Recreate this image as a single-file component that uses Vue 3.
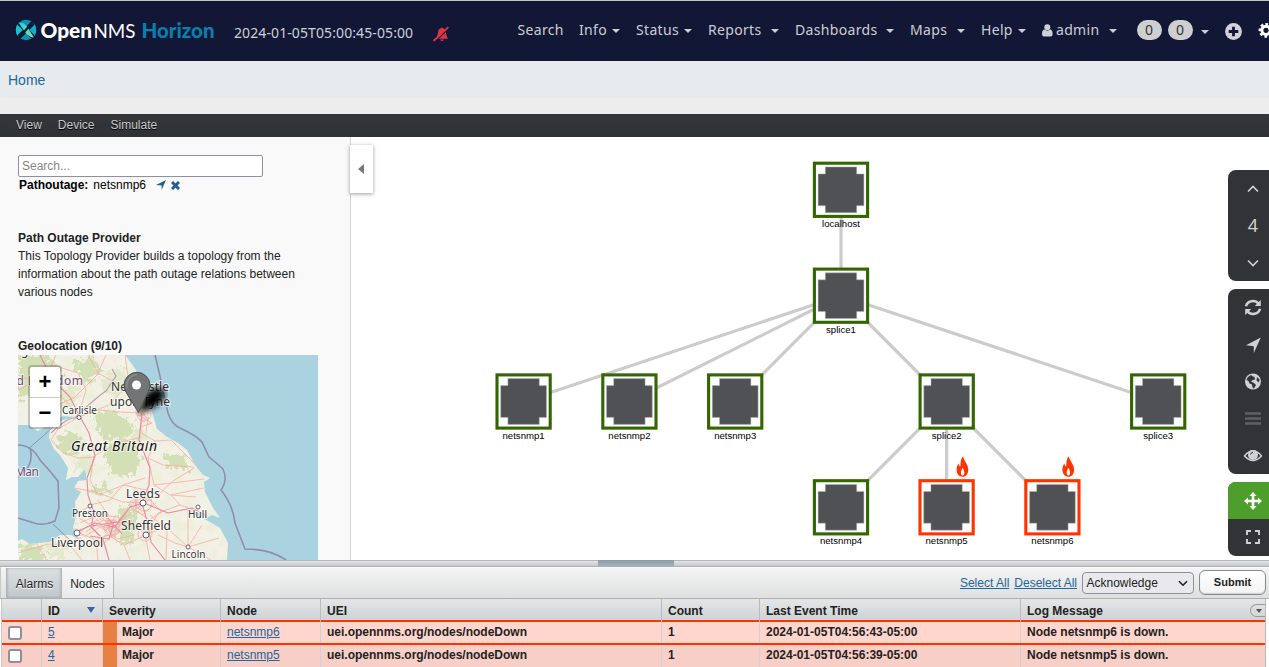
<script setup>
const nav = [
  { label: 'Search', w: 61.5 },
  { label: 'Info', w: 57, caret: 33 },
  { label: 'Status', w: 72, caret: 48 },
  { label: 'Reports', w: 87, caret: 63 },
  { label: 'Dashboards', w: 115, caret: 91 },
  { label: 'Maps', w: 71, caret: 47 },
  { label: 'Help', w: 60.5, caret: 37 },
]
const nodes = [
  { id: 'localhost', x: 841, y: 189.8 },
  { id: 'splice1', x: 841, y: 295.7 },
  { id: 'netsnmp1', x: 523.6, y: 401.5 },
  { id: 'netsnmp2', x: 629.4, y: 401.5 },
  { id: 'netsnmp3', x: 735.2, y: 401.5 },
  { id: 'splice2', x: 946.7, y: 401.5 },
  { id: 'splice3', x: 1158.2, y: 401.5 },
  { id: 'netsnmp4', x: 841, y: 507.3 },
  { id: 'netsnmp5', x: 946.6, y: 507.3, down: true },
  { id: 'netsnmp6', x: 1052.4, y: 507.3, down: true },
]
const byId = Object.fromEntries(nodes.map((n) => [n.id, n]))
const edges = [
  ['localhost', 'splice1'], ['splice1', 'netsnmp1'], ['splice1', 'netsnmp2'],
  ['splice1', 'netsnmp3'], ['splice1', 'splice2'], ['splice1', 'splice3'],
  ['splice2', 'netsnmp4'], ['splice2', 'netsnmp5'], ['splice2', 'netsnmp6'],
].map(([a, b]) => ({ a: byId[a], b: byId[b] }))
const towns = [
  [61, 62.5, 2], [72, 151, 2], [125, 148, 3], [59, 178, 3], [128, 180, 3], [180, 152, 2], [170, 192, 2],
]
const alarms = [
  { id: 5, node: 'netsnmp6', time: '2024-01-05T04:56:43-05:00' },
  { id: 4, node: 'netsnmp5', time: '2024-01-05T04:56:39-05:00' },
]
</script>

<template>
  <div class="page">
    <header class="top">
      <svg class="logo" width="202" height="30" viewBox="0 0 202 30">
        <defs>
          <linearGradient id="lg" x1="0" y1="0" x2="1" y2="1">
            <stop offset="0" stop-color="#14d1df" /><stop offset="1" stop-color="#8be8a5" />
          </linearGradient>
          <clipPath id="disc"><circle cx="11" cy="15" r="10.2" /></clipPath>
        </defs>
        <g clip-path="url(#disc)">
          <rect x="0" y="4" width="22" height="22" fill="#0a93b5" />
          <path d="M0 4 11 15 0 26z" fill="#16c3d3" />
          <path d="M22 4 11 15 22 26z" fill="#0cb2cb" />
          <path d="M0 4 22 26M22 4 0 26" stroke="#131736" stroke-width="4.600" />
          <path d="M3.500 7.500Q9 6.500 12.800 13L19.300 23Q11.500 21 9 15.500z" fill="url(#lg)" />
          <path d="M19 5.500 3 24" stroke="#131736" stroke-width="2.200" />
        </g>
        <text x="25.500" y="23" class="lt b" textLength="51.500" lengthAdjust="spacingAndGlyphs">Open</text>
        <text x="78.500" y="23" class="lt" textLength="42" lengthAdjust="spacingAndGlyphs">NMS</text>
        <text x="126.500" y="23" class="lt b h" textLength="73" lengthAdjust="spacingAndGlyphs">Horizon</text>
      </svg>
      <span class="stamp">2024-01-05T05:00:45-05:00</span>
      <svg class="bell" width="16" height="16" viewBox="0 0 16 16">
        <path d="M2 12.700Q5 10 5 6.500Q5 2.800 8.200 2.200Q9 .3 9.800 2.200Q13 2.800 13 6.500Q13 10 15.200 12.700zM7 13.400H11Q9 16.400 7 13.400z" fill="#dc3545" />
        <path d="M1.300 16 16.300 2" stroke="#131736" stroke-width="1.600" />
        <path d="M.6 14.900 15.400 1.100" stroke="#dc3545" stroke-width="1.800" />
        <path d="M-.2 11.500 4 8V13z" fill="#131736" />
        <path d="M.6 14.900 8 8" stroke="#dc3545" stroke-width="1.800" />
      </svg>
      <nav class="nav">
        <span v-for="n in nav" :key="n.label" class="item" :style="{ width: n.w + 'px' }">
          <span class="lab" :style="n.caret ? { width: n.caret + 'px' } : {}">{{ n.label }}</span>
          <i v-if="n.caret" class="caret" />
        </span>
        <svg class="user" width="11" height="13" viewBox="0 0 11 13" fill="#cdd0d6">
          <circle cx="5.300" cy="3.200" r="3" /><path d="M0 10Q0 5.500 2.700 5.500Q5.300 7.800 8 5.500Q10.600 5.500 10.600 10Q10.600 12.500 8.500 12.500H2Q0 12.500 0 10z" />
        </svg>
        <span class="lab admin">admin</span><i class="caret" />
        <span class="pill p1">0</span><span class="pill">0</span><i class="caret c2" />
        <svg class="plus" width="17" height="17" viewBox="0 0 17 17">
          <circle cx="8.500" cy="8.500" r="8.400" fill="#d0d2d7" /><path d="M8.500 3.700V13.300M3.700 8.500H13.300" stroke="#131736" stroke-width="2.800" />
        </svg>
        <svg class="gear" width="17" height="17" viewBox="0 0 17 17">
          <circle cx="8" cy="8.300" r="4.100" fill="none" stroke="#fff" stroke-width="3" />
          <circle cx="8" cy="8.300" r="6.200" fill="none" stroke="#fff" stroke-width="2.400" stroke-dasharray="2.700 2.169" stroke-dashoffset="1.350" />
        </svg>
      </nav>
    </header>
    <div class="crumb"><a>Home</a></div>
    <div class="menu"><span>View</span><span>Device</span><span>Simulate</span></div>

    <main class="main">
      <aside class="side">
        <input class="search" placeholder="Search..." />
        <div class="crit">
          <b>Pathoutage:</b><span>netsnmp6</span>
          <svg width="10" height="10" viewBox="0 0 10 10"><path d="M10 0 5.600 10V5.500L0 4.900z" fill="#225f91" /></svg>
          <svg class="x" width="9" height="9" viewBox="0 0 9 9"><path d="M1 1 8 8M8 1 1 8" stroke="#225f91" stroke-width="3" /></svg>
        </div>
        <h4 class="prov">Path Outage Provider</h4>
        <p>This Topology Provider builds a topology from the information about the path outage relations between various nodes</p>
        <h4 class="geo">Geolocation (9/10)</h4>
        <div class="map">
          <svg width="300" height="205" viewBox="0 0 300 205">
            <defs>
              <clipPath id="land"><path d="M0 0H107L113 8 118 15 125 34 133 54 139 74 149 82 160 88 169 95 177 110 185 120 192 123 186 127 187 137 195 153 202 163 194 160 190 162 180 158 168 155 180 161 192 167 202 173 210 188 209 205H0V186L4 184 12 189 32 187 42 180 53 180 61 185 55 173 58 161 57 147 63 137 56 133 60 126 69 125 67 114 60 122 54 122 48 125 50 113 42 100 36 94 31 83 32 73 45 65 58 62 45 61 32 69 20 76 10 70 0 70z" /></clipPath>
              <filter id="soft"><feGaussianBlur stdDeviation="3" /></filter>
              <filter id="rag" x="-20%" y="-20%" width="140%" height="140%"><feTurbulence type="fractalNoise" baseFrequency=".2" numOctaves="3" seed="4" /><feDisplacementMap in="SourceGraphic" scale="18" xChannelSelector="R" yChannelSelector="G" /></filter>
              <filter id="mottle" x="0" y="0" width="100%" height="100%">
                <feTurbulence type="fractalNoise" baseFrequency=".09" numOctaves="4" seed="11" />
                <feColorMatrix values="0 0 0 0 .78  0 0 0 0 .86  0 0 0 0 .63  0 3 0 0 -1.45" />
              </filter>
            </defs>
            <rect width="300" height="205" fill="#aad3df" />
            <g clip-path="url(#land)">
              <rect width="300" height="205" fill="#f3f0e6" />
              <rect width="300" height="205" filter="url(#mottle)" opacity=".6" />
              <g filter="url(#rag)" fill="#d3e0b6">
                <path d="M0 0H30L45 20 20 40 0 45zM55 6 75 2 85 18 65 30zM75 60 92 55 117 70 108 85 90 85 78 76z" />
                <path d="M85 90 113 85 125 105 112 122 93 118zM38 84 55 76 66 86 58 103 43 96zM146 98 168 102 170 116 150 112z" />
                <path d="M73 133 88 128 93 137 80 141zM101 152 117 150 117 185 103 190zM0 192 20 187 30 205H0z" />
              </g>
              <g filter="url(#rag)" fill="#e2e9cc">
                <path d="M40 30 62 32 57 52 42 55zM60 100 75 105 74 120 60 115zM118 70 130 80 120 97 112 86zM30 188 50 190 47 205H35zM82 24 100 12 112 24 104 40 86 38z" />
              </g>
              <g fill="#e6dcd9" filter="url(#rag)"><circle cx="94" cy="173" r="8" /><circle cx="61" cy="177" r="6" /><circle cx="120" cy="145" r="8" /><circle cx="127" cy="175" r="6" /><circle cx="126" cy="62" r="6" /></g>
              <g fill="none" stroke="#f8ada0" stroke-width=".8" stroke-linejoin="round">
                <path d="M0 20 20 28 34 10 60 18 68 35 60 62 81 55 101 57 124 58 133 53M61 62 40 74 33 85 44 97 60 103 76 102M60 62 91 50 111 28 107 0M70 0 80 18 111 35 124 58M0 35 20 25M38 0 30 18 42 40 61 61M88 0 79 20 57 42 40 50" />
                <path d="M123 58 123 78 137 86 153 85 173 105 186 120M137 86 130 103 145 110 176 112M130 103 136 130 162 127 186 124M136 130 152 140 186 133M124 82 100 88 76 101 72 125 80 140 106 130 132 136M56 133 78 137 105 147 126 148 140 140 155 126 176 113M72 150 92 145 105 130 127 123" />
                <path d="M72 151 56 160M72 151 94 173 126 148M59 177 74 170 94 173 113 166 127 180 148 172 170 192 201 183M59 177 78 185 90 180 106 190 128 180 140 158 162 150 182 157M127 180 132 205M148 205 149 175 132 160M170 192V155M170 192 193 205M78 185 80 205M106 190 112 205M3 197 30 189 53 192 64 205M162 150 153 140 178 142" />
                <circle cx="94" cy="173" r="8" /><circle cx="94" cy="173" r="4" /><circle cx="126" cy="148" r="8" /><circle cx="126" cy="59" r="7" /><circle cx="127" cy="179" r="7" />
                <path d="M61 163 71 169 88 162 101 178 83 182 73 171M68 177 85 165 104 168M87 158 94 182M117 140 132 145 144 157 131 165 118 155zM119 50 130 65 128 76M140 180 157 188 170 192 184 170M20 192 28 203M80 145 91 161" />
                <path d="M62 168 80 160 100 162 110 175M66 182 82 172 100 184 116 180M75 160 88 176 98 160M84 190 97 178 108 160M120 60 134 68 122 72M110 150 124 160 138 148" />
              </g>
              <g fill="none" stroke="#e8879f" stroke-width="1.100" stroke-linejoin="round">
                <path d="M22 0 34 24 52 42 60 58 71 78 77 101 69 123 70 140 76 158 73 172 85 184 91 205M124 59 121 85 132 113 131 130 124 148 129 166 133 187 147 205M59 177 77 168 97 172 112 152 126 148 150 158 174 153 189 161M73 171 100 167 113 151M90 163 104 179M72 181 91 184 96 167" />
              </g>
              <path d="M33 78Q50 62 57 63 76 44 88 36L98 21 94 14" fill="none" stroke="#b8a4b1" stroke-width="1.300" />
            </g>
            <g fill="none" stroke="#8d7ba3" stroke-width="1.600" opacity=".8">
              <path d="M137 0Q142 20 145 36L150 58Q154 70 162 73 179 81 184 87L191 102Q202 111 205 114 210 125 203 135 215 150 217 168L227 194Q253 194 268 205" />
              <path d="M0 90Q14 90 22 105L31 115 40 126 41 153 37 166Q25 172 13 167L0 163M12 93Q17 111 0 122" />
              <path d="M10 94Q22 84 35 72M35 169 58 191" stroke-width="1" />
            </g>
            <g class="place">
              <text x="-9" y="30" class="purple" textLength="74">ed Kingdom</text>
              <text x="-3" y="121" class="purple" textLength="24">Man</text>
              <text x="3" y="-.5" textLength="7">g</text>
              <text x="93" y="35.500" textLength="58">Newcastle</text>
              <text x="92" y="51" textLength="60">upon Tyne</text>
              <text x="44" y="58.500" class="sm" textLength="35">Carlisle</text>
              <text x="108" y="143" textLength="34">Leeds</text>
              <text x="54" y="162" class="sm" textLength="36">Preston</text>
              <text x="103" y="175" textLength="50">Sheffield</text>
              <text x="33" y="192" textLength="52">Liverpool</text>
              <text x="170" y="163" class="sm" textLength="19">Hull</text>
              <text x="153.500" y="202.500" class="sm" textLength="34">Lincoln</text>
              <text x="53" y="95.500" class="gb" textLength="86">Great Britain</text>
            </g>
            <circle v-for="t in towns" :key="t[0] + '-' + t[1]" :cx="t[0]" :cy="t[1]" :r="t[2]" fill="#fff" stroke="#555" stroke-width=".9" />
            <path d="M120 58 127 40Q140 28 146 36 150 50 120 58z" filter="url(#soft)" />
            <path d="M120.500 57.500 108.500 38A13 13 0 1 1 129.500 38z" fill="#737475" stroke="#4d4f50" />
            <path d="M119 19.500A11 11 0 0 0 109 33" fill="none" stroke="#8d8d8d" stroke-width="1.500" />
            <circle cx="118.500" cy="30" r="4.500" fill="#fff" />
          </svg>
          <div class="zoom"><b>+</b><b>−</b></div>
        </div>
      </aside>
      <section class="canvas">
        <svg class="graph" width="1269" height="423" viewBox="0 137 1269 423">
          <line v-for="(e, i) in edges" :key="i" :x1="e.a.x" :y1="e.a.y" :x2="e.b.x" :y2="e.b.y" stroke="#ccc" stroke-width="3.200" />
          <g v-for="n in nodes" :key="n.id" :transform="`translate(${n.x} ${n.y})`">
            <rect x="-26.600" y="-26.600" width="53.200" height="53.200" fill="#fff" :stroke="n.down ? '#ff3300' : '#336600'" stroke-width="3.100" />
            <path d="M-15.700-22.900H15.700V-15.900H22.900V15.900H15.700V22.900H-15.700V15.900H-22.900V-15.900H-15.700z" fill="#505154" stroke="#b5b5b7" stroke-width=".5" />
            <text y="37.200" text-anchor="middle" class="nl">{{ n.id }}</text>
            <g v-if="n.down" transform="translate(9.800 -51)">
              <path d="M6.800 0C6.500 3.500 12 8 11.900 13.500 11.800 18 9.500 20.500 6 20.500 2.500 20.500.2 17.500.2 13 .2 10.500 1.200 8.500 2.300 7.200 2.400 9 3 10 3.800 10.200 4.800 8 3.200 3.500 6.800 0z" fill="#f30" />
              <path d="M6.200 11.500C8.200 14.500 8.600 19.300 6.200 19.300 3.800 19.300 4.200 14.500 6.200 11.500z" fill="#fff" />
            </g>
          </g>
        </svg>
        <div class="fold"><i /></div>
        <div class="tools">
          <div class="box lvl">
            <svg width="12" height="8" viewBox="0 0 12 8"><path d="M1 6.500 6 1.500 11 6.500" /></svg>
            <span>4</span>
            <svg width="12" height="8" viewBox="0 0 12 8"><path d="M1 1.500 6 6.500 11 1.500" /></svg>
          </div>
          <div class="box acts">
            <svg width="18" height="18" viewBox="0 0 18 18"><path d="M2 7.200A7 6.500 0 0 1 14.500 4.700M16 9.800A7 6.500 0 0 1 3.500 12.300" stroke-width="2.500" /><path class="f" d="M16.800 1V7H10.800zM1.200 16V10H7.200z" /></svg>
            <svg width="18" height="18" viewBox="0 0 18 18"><path class="f" d="M16.800 1.500 9.800 17V10.200L2 9.200z" /></svg>
            <svg width="18" height="18" viewBox="0 0 18 18"><circle class="f" cx="9" cy="8.500" r="8" /><path d="M7 2 5.500 3 3.500 4.500 2.500 7 4.500 8 5.500 10.500 8 11.500 8.500 14.500 10 15.500 12 12 9.500 9.500 7 9 8.500 7 11 6.500 10.500 4 9 3.500zM13 4 15.500 6.500 15 9.500 12.500 7.500z" style="fill:#323336;stroke:none" /></svg>
            <svg class="dim" width="18" height="18" viewBox="0 0 18 18"><path d="M1 3.500H17M1 8.500H17M1 13.500H17" stroke-width="2.400" /></svg>
            <svg width="20" height="18" viewBox="0 0 20 18"><path d="M1.500 9Q10-1.500 18.500 9 10 18 1.500 9z" stroke-width="1.500" /><circle class="f" cx="10" cy="8" r="5" /><path d="M7.500 7.500Q8 5.500 10 5.200" style="stroke:#323336" stroke-width="1" /></svg>
          </div>
          <div class="box modes">
            <div class="on"><svg width="20" height="20" viewBox="0 0 20 20"><path d="M10 3V17M3 10H17" stroke-width="2.600" /><path class="f" d="M10 1 13.500 5H6.500zM10 19 6.500 15H13.500zM1 10 5 6.500V13.500zM19 10 15 13.500V6.500z" /></svg></div>
            <div><svg width="16" height="18" viewBox="0 0 16 18"><path d="M2 6V2H6M10 2H14V6M14 10V14H10M6 14H2V10" stroke-width="1.900" /></svg></div>
          </div>
        </div>
      </section>
    </main>

    <div class="split"><i /></div>
    <section class="bottom">
      <div class="tabs">
        <span class="tab sel">Alarms</span><span class="tab">Nodes</span>
        <div class="right">
          <a>Select All</a><a>Deselect All</a>
          <div class="combo">Acknowledge<svg width="10" height="7" viewBox="0 0 10 7"><path d="M1 1.200 5 5.200 9 1.200" fill="none" stroke="#222" stroke-width="1.600" /></svg></div>
          <button>Submit</button>
        </div>
      </div>
      <div class="grid">
        <div class="row head">
          <span /><span>ID<i class="sort" /></span><span class="sv">Severity</span><span>Node</span><span>UEI</span><span>Count</span><span>Last Event Time</span><span>Log Message<em><i /></em></span>
        </div>
        <div v-for="(a, k) in alarms" :key="a.id" class="row" :class="{ odd: k }">
          <span class="ck"><i /></span><span><a>{{ a.id }}</a></span><span class="sev"><i />Major</span><span><a>{{ a.node }}</a></span>
          <span>uei.opennms.org/nodes/nodeDown</span><span>1</span><span>{{ a.time }}</span><span>Node {{ a.node }} is down.</span>
        </div>
      </div>
    </section>
  </div>
</template>

<style>
body { margin: 0; overflow: hidden; }
</style>
<style scoped>
* { box-sizing: border-box; }
.page { width: 1269px; height: 667px; overflow: hidden; background: #ededed; font: 12px/18px "Liberation Sans", Arial, sans-serif; color: #222; }
.top { height: 61px; background: #131736; border-top: 1px solid #c3c8c4; display: flex; align-items: flex-start; overflow: hidden; font-family: "Noto Sans", sans-serif; }
.logo { margin: 14px 0 0 15px; flex: none; }
.lt { font: 400 20px Lato, sans-serif; fill: #fff; }
.lt.b { font-weight: 900; }
.lt.h { fill: #087fae; }
.stamp { margin: 22px 0 0 17px; width: 179px; font-size: 14px; line-height: 20px; color: #cdd0d6; letter-spacing: .1px; white-space: nowrap; flex: none; }
.bell { margin: 25px 0 0 20px; flex: none; }
.nav { margin: 19px 0 0 68.500px; height: 20px; display: flex; align-items: center; flex: none; font-size: 14px; line-height: 20px; color: #cdced4; letter-spacing: .33px; }
.item { display: flex; align-items: center; flex: none; white-space: nowrap; }
.lab { flex: none; }
.caret { flex: none; margin-top: 2px; border: 4px solid transparent; border-top-color: #cdced4; border-bottom: 0; }
.user { margin: 0 3.500px 0 0; }
.admin { width: 52.500px; }
.pill { width: 25px; height: 20px; border-radius: 10px; background: #cecfd0; color: #333; text-align: center; margin-right: 8px; letter-spacing: 0; font-size: 14px; line-height: 20px; flex: none; }
.p1 { margin-left: 20px; margin-right: 6px; }
.c2 { margin-top: 4px; }
.plus { margin: 2px 16px 0 16px; flex: none; }
.gear { flex: none; margin-top: 1px; }
.crumb { height: 37px; background: #e7ebee; border-radius: 0 0 0 4px; padding: 9px 8px; font-size: 14px; line-height: 20px; }
.menu { margin-top: 16px; height: 23px; background: linear-gradient(#353639, #303134); padding-left: 16px; display: flex; gap: 16px; color: #c9c9ca; line-height: 22px; text-shadow: 0 1px 0 #000; }
.main { height: 423px; display: flex; position: relative; background: #fff; }
.side { width: 351px; height: 423px; background: #f9f9f9; border-right: 1px solid #d2d3d4; padding: 18px 18px 0; overflow: hidden; flex: none; }
.search { display: block; width: 245px; height: 22px; border: 1px solid #8f8f9d; border-radius: 2px; padding: 0 3px; font: 12px "Liberation Sans", sans-serif; background: #fff; }
.search::placeholder { color: #858585; }
.crit { display: flex; align-items: center; color: #000; height: 16px; padding-left: 1px; }
.crit span { margin: 0 10px 0 5px; }
.crit .x { margin-left: 5px; }
h4 { font-size: 12px; line-height: 18px; margin: 0; }
.prov { margin-top: 36px; }
p { margin: 0; width: 290px; }
.geo { margin-top: 36px; }
.map { position: relative; width: 300px; height: 205px; overflow: hidden; }
.map svg { display: block; }
.place text { font: 12px "Noto Sans", sans-serif; fill: #333; stroke: #fff; stroke-opacity: .7; stroke-width: 2px; paint-order: stroke; }
.place .sm { font-size: 10px; }
.place .purple { fill: #6f4a78; }
.place .gb { font: italic 14px "Noto Sans", sans-serif; fill: #111; }
.zoom { position: absolute; left: 10px; top: 10px; width: 34px; height: 64px; border: 2px solid rgba(0, 0, 0, .2); background-clip: padding-box; background-color: #fff; border-radius: 4px; }
.zoom b { display: block; height: 30px; text-align: center; font: bold 22px/30px "Liberation Sans", sans-serif; color: #000; }
.zoom b + b { border-top: 1px solid #ccc; }
.canvas { flex: 1; }
.graph { position: absolute; left: 0; top: 0; }
.nl { font: 9.600px "Liberation Sans", sans-serif; fill: #000; }
.fold { position: absolute; left: 350px; top: 8px; width: 23px; height: 48px; background: #fff; box-shadow: 0 1px 4px rgba(0, 0, 0, .4); display: flex; align-items: center; padding-left: 8px; }
.fold i { border: 5px solid transparent; border-right: 6px solid #777; border-left: 0; }
.tools { position: absolute; left: 1228px; top: 33px; width: 50px; display: grid; gap: 8px; }
.box { background: #323336; border-radius: 8px 0 0 8px; overflow: hidden; display: grid; justify-items: center; align-items: center; }
.box svg { fill: none; stroke: #d0d1d3; stroke-width: 1.600; }
.box .f { fill: #d0d1d3; stroke: none; }
.lvl { height: 111px; grid-template-rows: 37px 37px 37px; }
.lvl span { font: 18px/26px "Noto Sans", sans-serif; color: #d0d1d3; padding-bottom: 2px; }
.acts { height: 185px; grid-template-rows: repeat(5, 37px); }
.box .dim { stroke: #5f6063; }
.modes { height: 74px; grid-template-rows: 37px 37px; }
.modes div { width: 100%; height: 37px; display: flex; align-items: center; justify-content: center; }
.modes .on { background: #4e9e2c; }
.on svg { stroke: #fff; }
.on .f { fill: #fff; }
.split { height: 7px; border-top: 1px solid #b5b7b8; border-bottom: 1px solid #aeb1b2; background: linear-gradient(#e2e4e6, #c5c8cb); display: flex; padding-left: 598px; }
.split i { width: 76px; background: linear-gradient(#8e9ca7, #a7b3bc); margin: -1px 0; }
.bottom { height: 100px; background: #fff; }
.tabs { height: 32px; border-bottom: 1px solid #adb0b1; background: linear-gradient(#f4f4f4, #dedfdf); display: flex; padding-left: 5px; border-left: 1px solid #c5c7c8; border-top: 1px solid #f9f9f9; }
.tab { width: 52px; text-align: center; line-height: 32px; border-right: 1px solid #b4b7b8; text-shadow: 0 1px 0 #fff; flex: none; background: linear-gradient(#f7f7f7, #e9e9e9); }
.sel { width: 56px; padding-left: 1px; background: linear-gradient(#dce0e2, #c1c7cb); border-left: 1px solid #aeb4b8; box-shadow: inset 0 0 3px rgba(120, 130, 136, .6); }
.right { margin-left: auto; display: flex; align-items: center; padding-right: 3px; }
a { color: #22669a; text-decoration: none; }
.right a { text-decoration: underline; margin-right: 5px; }
.combo { width: 112px; height: 22px; border: 1px solid #8f8f9d; border-radius: 4px; background: #e9e9ed; line-height: 20px; padding: 0 5px 0 3.500px; display: flex; justify-content: space-between; align-items: center; color: #222; }
button { margin: 0 0 2px 5px; width: 67px; height: 25px; border: 1px solid #888b8d; border-radius: 6px; background: linear-gradient(#fff, #f3f3f3); box-shadow: inset 0 -1px 1px #ccc; font: bold 11px "Liberation Sans", sans-serif; color: #222; padding: 0; }
.grid { margin: 0 3px 0 1px; border-left: 1px solid #c5c7c8; border-right: 1px solid #b5b7b8; width: 1265px; }
.row { height: 23px; border-top: 2px solid #f30; display: grid; grid-template-columns: 40px 61px 118px 100px 341px 98px 261px 1fr; background: #ffd6cd; font-weight: bold; line-height: 20px; }
.row.odd { height: 26px; background: #f7cfc6; }
.row > span { border-right: 1px solid #cfd2d4; padding-left: 6px; display: flex; white-space: nowrap; position: relative; }
.row > span:last-child { border-right: 0; }
.row a { font-weight: normal; text-decoration: underline; }
.row.head { height: 21px; border-top: 0; background: linear-gradient(#e4e6e7, #d0d3d5); line-height: 24px; }
.head > span { border-color: #b9bcbe; }
.sort { border: 4px solid transparent; border-top: 6px solid #3b62a5; border-bottom: 0; margin: 8px 0 0 27px; height: 0; }
.head em { margin: 5px 0 0 auto; width: 15px; height: 13px; border: 1px solid #999; border-right: 0; border-radius: 8px 0 0 8px; padding: 4px 0 0 5px; }
.head em i { display: block; width: 0; height: 0; border: 3.500px solid transparent; border-top: 4px solid #555; border-bottom: 0; }
.row > .ck i { width: 14px; height: 14px; border: 2px solid #8f8f9d; border-radius: 3px; background: #fff; margin-top: 4px; }
.row > .sev { padding: 0; }
.sev i { width: 14px; margin-right: 5px; background: #e87f43; }
</style>
